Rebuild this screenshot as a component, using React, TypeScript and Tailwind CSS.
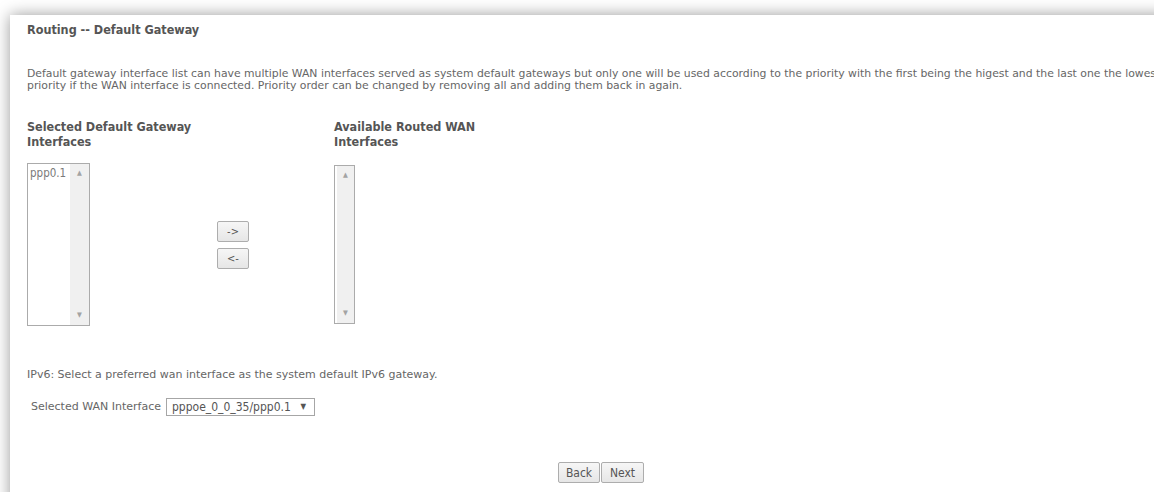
import React from "react";

const font = "font-['DejaVu_Sans',sans-serif]";

function ListBox({ items, width }: { items: string[]; width: string }) {
  return (
    <div className={`flex h-full ${width} border border-[#ababab] bg-white`}>
      <div className="flex-1 pl-[2px] pt-[2px] text-[11.5px] font-normal leading-[14px] text-[#7a7a7a]">
        {items.map((it) => (
          <div key={it}>{it}</div>
        ))}
      </div>
      <div className="flex w-[19px] flex-col items-center justify-between bg-[#f0f0f0] py-[6px] text-[7px] leading-none text-[#a3a3a3]">
        <span>▲</span>
        <span>▼</span>
      </div>
    </div>
  );
}

function Btn({ label, className = "" }: { label: string; className?: string }) {
  return (
    <button
      className={`rounded-[2px] border border-[#adadad] bg-gradient-to-b from-[#f6f6f6] to-[#e6e6e6] font-['DejaVu_Sans_Condensed','DejaVu_Sans',sans-serif] font-stretch-condensed font-normal text-[#555] ${className}`}
    >
      {label}
    </button>
  );
}

export default function App() {
  return (
    <div className={`h-screen overflow-hidden bg-white pl-[10px] pt-[15px] ${font}`}>
      <div className="min-h-[600px] w-[1182px] bg-white pl-[17px] shadow-[0_0_15px_rgba(0,0,0,0.4)]">
        <h1 className="pt-[7px] font-['DejaVu_Sans_Condensed','DejaVu_Sans',sans-serif] text-[12.5px] font-bold leading-[15px] text-[#555] font-stretch-condensed">
          Routing -- Default Gateway
        </h1>

        <p className="mt-[31px] whitespace-nowrap text-[10.85px] leading-[12px] text-[#666]">
          Default gateway interface list can have multiple WAN interfaces served as system default gateways but only one will be used according to the priority with the first being the higest and the last one the lowest
          <br />
          priority if the WAN interface is connected. Priority order can be changed by removing all and adding them back in again.
        </p>

        <div className="mt-[27px] grid grid-cols-[190px_117px_auto] font-['DejaVu_Sans_Condensed','DejaVu_Sans',sans-serif] text-[12.5px] font-bold leading-[15px] text-[#555] font-stretch-condensed">
          <div className="w-[175px]">Selected Default Gateway Interfaces</div>
          <div />
          <div className="w-[175px]">Available Routed WAN Interfaces</div>

          <div className="mt-[14px] h-[163px]">
            <ListBox items={["ppp0.1"]} width="w-[63px]" />
          </div>
          <div className="mt-[14px] flex flex-col items-start justify-center gap-[6px]">
            <Btn label="->" className="h-[21px] w-[32px] text-[11px]" />
            <Btn label="<-" className="h-[21px] w-[32px] text-[11px]" />
          </div>
          <div className="mt-[16px] h-[159px]">
            <ListBox items={[]} width="w-[21px]" />
          </div>
        </div>

        <p className="mt-[43px] text-[11px] leading-[12px] text-[#666]">
          IPv6: Select a preferred wan interface as the system default IPv6 gateway.
        </p>

        <div className="mt-[17px] flex items-center gap-[5px] pl-[4px] text-[11px] text-[#666]">
          <span>Selected WAN Interface</span>
          <div className="flex h-[18px] w-[149px] items-center justify-between border border-[#a6a6a6] bg-white pl-[5px] pr-[8px] font-['DejaVu_Sans_Condensed','DejaVu_Sans',sans-serif] text-[12px] text-[#555] font-stretch-condensed">
            <span>pppoe_0_0_35/ppp0.1</span>
            <span className="text-[8px]">▼</span>
          </div>
        </div>

        <div className="mt-[46px] flex justify-center gap-[1px] pr-[17px]">
          <Btn label="Back" className="h-[21px] w-[42px] text-[12px]" />
          <Btn label="Next" className="h-[21px] w-[43px] text-[12px]" />
        </div>
      </div>
    </div>
  );
}
